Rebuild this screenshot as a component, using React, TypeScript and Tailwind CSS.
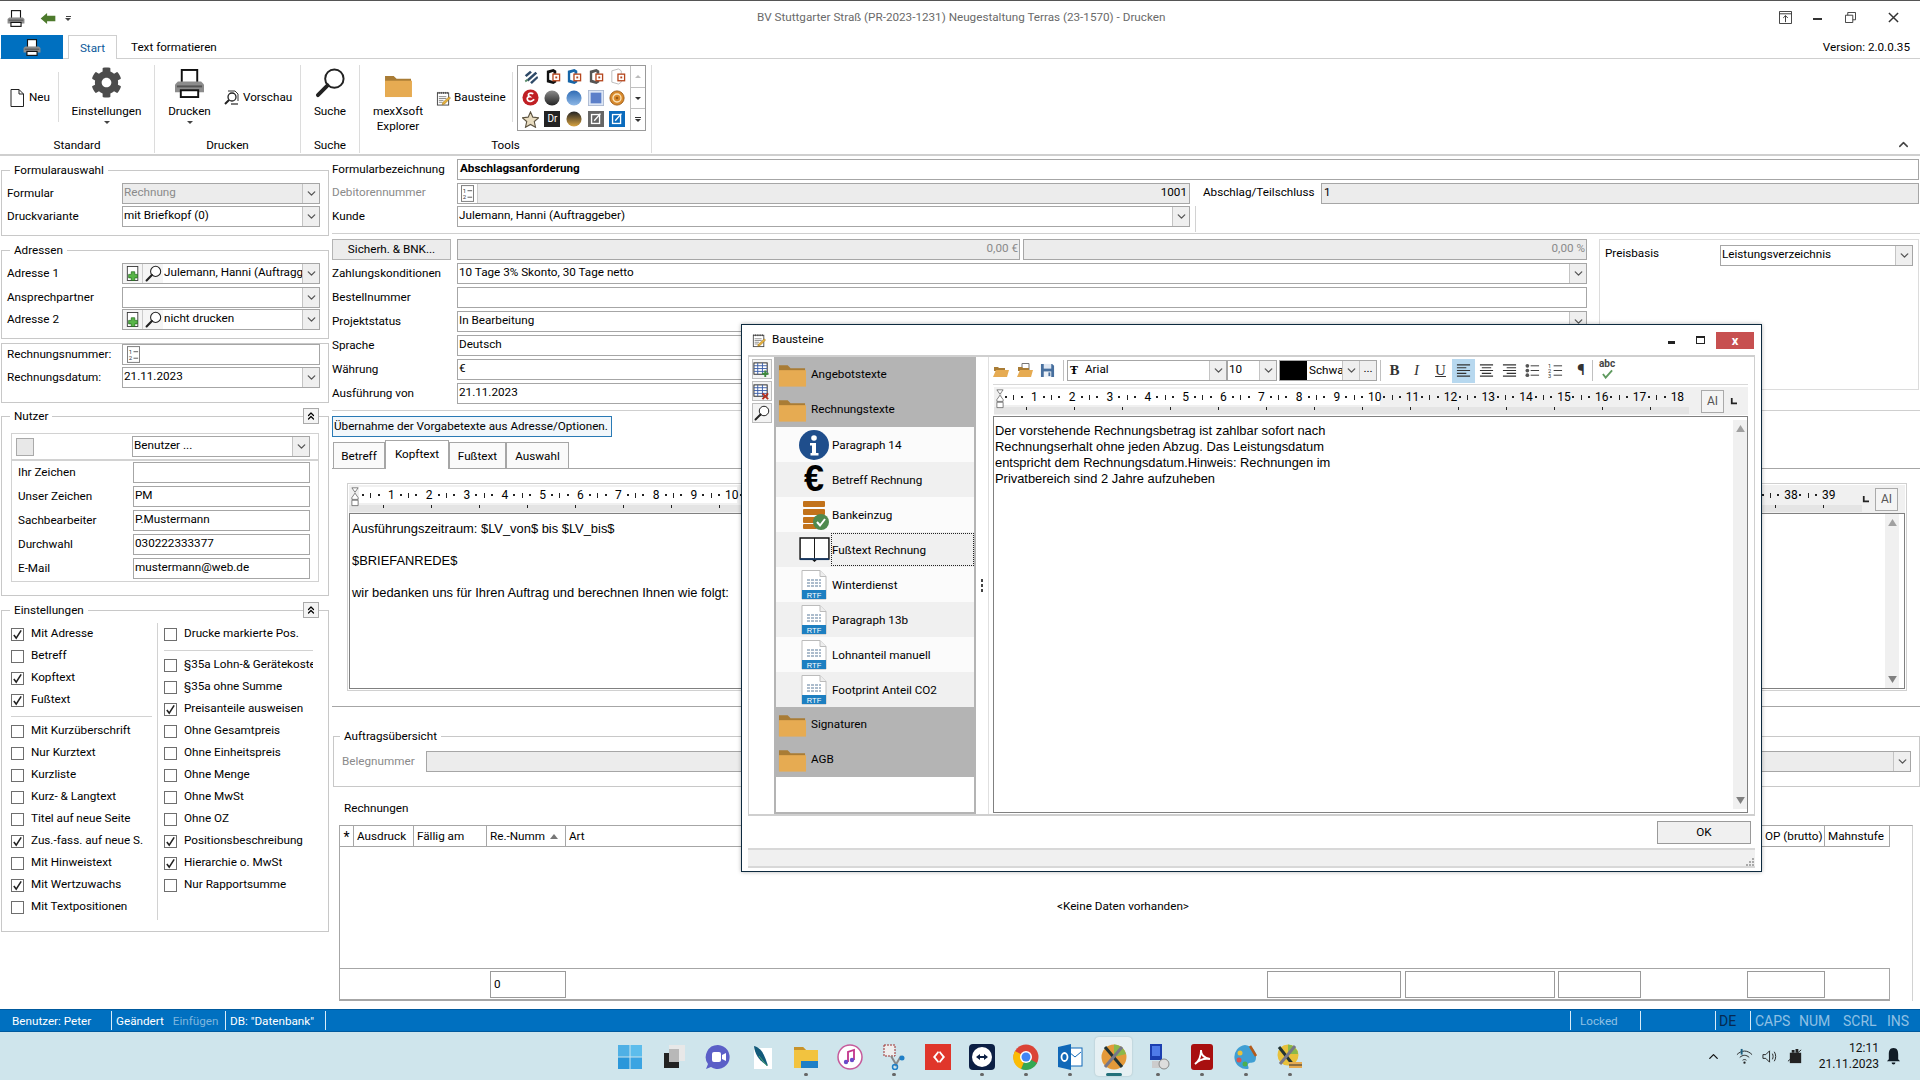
import React from "react";
import { FaCog } from "react-icons/fa";
import { ChevronsUp, ChevronDown, ChevronUp } from "lucide-react";

const UI = "[font-family:Roboto,sans-serif]";
const ARIAL = "[font-family:'Liberation_Sans',Arial,sans-serif]";

function Caret() {
  return <ChevronDown size={13} strokeWidth={2.4} className="text-[#555]" />;
}

function Printer({ className = "" }: { className?: string }) {
  return (
    <svg viewBox="0 0 32 30" className={className}>
      <rect x="8" y="1" width="16" height="14" fill="#fff" stroke="#111" strokeWidth="2" />
      <path d="M4 13h24l3 3v8H1v-8z" fill="#8c8c8c" />
      <rect x="3" y="17" width="26" height="2" fill="#555" />
      <rect x="7" y="22" width="18" height="7" fill="#fff" stroke="#111" strokeWidth="2" />
    </svg>
  );
}

function Folder({ className = "" }: { className?: string }) {
  return (
    <svg viewBox="0 0 30 26" className={className}>
      <path d="M1 3h9l3 3h15v18H1z" fill="#a97c35" />
      <path d="M1 8h28v17H1z" fill="#e6ab52" />
    </svg>
  );
}

function OpenFolder({ className = "", paper }: { className?: string; paper?: boolean }) {
  return (
    <svg viewBox="0 0 16 15" className={className}>
      {paper && <path d="M5 .5h7v7H5z" fill="#fff" stroke="#777" />}
      <path d="M1 4h4l1 1h6v3H1z" fill="#a97c35" />
      <path d="M3 7h13l-2 7H0z" fill="#e6ab52" />
    </svg>
  );
}

function Mag({ className = "" }: { className?: string }) {
  return (
    <svg viewBox="0 0 32 32" className={className}>
      <circle cx="20" cy="12" r="9.5" fill="#fff" stroke="#222" strokeWidth="2" />
      <path d="M13 19L3 29" stroke="#222" strokeWidth="4" strokeLinecap="round" />
    </svg>
  );
}

function NotePad({ className = "" }: { className?: string }) {
  return (
    <svg viewBox="0 0 16 16" className={className}>
      <rect x="1.5" y="2" width="12" height="13" fill="#fff" stroke="#444" />
      <path d="M2 1v2M4 1v2M6 1v2M8 1v2M10 1v2M12 1v2" stroke="#444" />
      <path d="M3 6h8M3 8h8M3 10h5M3 12h4" stroke="#888" />
      <path d="M14 6l1.5 1.5L9 14l-2.5.7.7-2.5z" fill="#e8b23c" stroke="#8a6414" strokeWidth=".5" />
    </svg>
  );
}

function NumIcon() {
  return (
    <svg viewBox="0 0 14 18" className="w-[13px] h-[17px]">
      <rect x=".5" y=".5" width="13" height="17" fill="#fff" stroke="#777" />
      <text x="2" y="8" fontSize="6.5" fill="#333">1</text>
      <text x="2" y="15" fontSize="6.5" fill="#333">2</text>
      <path d="M7 6h5M7 13h5" stroke="#555" />
    </svg>
  );
}

function Check() {
  return (
    <svg viewBox="0 0 12 12" className="w-[11px] h-[11px]">
      <path d="M2 6.5l2.6 3.4L10 1.5" fill="none" stroke="#222" strokeWidth="1.7" />
    </svg>
  );
}

function Cb({ label, on }: { label: string; on?: boolean }) {
  return (
    <div className="flex items-center h-[22px] whitespace-nowrap overflow-hidden">
      <div className="w-[13px] h-[13px] shrink-0 border border-[#6e6e6e] bg-white flex items-center justify-center">
        {on && <Check />}
      </div>
      <span className="ml-[7px]">{label}</span>
    </div>
  );
}

function Combo({ value, gray, lead, className = "" }: { value?: string; gray?: boolean; lead?: React.ReactNode; className?: string }) {
  return (
    <div className={"flex h-[21px] border border-[#a6a6a6] overflow-hidden " + (gray ? "bg-[#ececec] text-[#8a8a8a] " : "bg-white ") + className}>
      {lead}
      <span className="flex-1 min-w-0 px-[1px] leading-[17px] whitespace-nowrap overflow-hidden">{value}</span>
      <div className="w-[17px] shrink-0 border-l border-[#c4c4c4] bg-[#efefef] flex items-center justify-center">
        <Caret />
      </div>
    </div>
  );
}

function Input({ value, className = "", lead }: { value?: string; className?: string; lead?: React.ReactNode }) {
  return (
    <div className={"flex h-[21px] border border-[#a6a6a6] bg-white overflow-hidden " + className}>
      {lead}
      <span className="flex-1 px-[1px] leading-[17px] whitespace-nowrap overflow-hidden">{value}</span>
    </div>
  );
}

function AddLead() {
  return (
    <>
      <div className="w-[20px] shrink-0 border-r border-[#ccc] bg-[#f5f5f5] flex items-center justify-center">
        <svg viewBox="0 0 16 18" className="w-[14px] h-[17px]">
          <rect x="1.5" y="1" width="12" height="16" fill="#fff" stroke="#333" />
          <path d="M6 7h4v3h3v4h-3v3H6v-3H3v-4h3z" fill="#58b548" stroke="#1f6a18" strokeWidth=".8" />
        </svg>
      </div>
      <div className="w-[20px] shrink-0 bg-[#f5f5f5] flex items-center justify-center">
        <Mag className="w-[17px] h-[17px]" />
      </div>
    </>
  );
}

function Group({ title, className = "", children, collapse }: { title: string; className?: string; children: React.ReactNode; collapse?: boolean }) {
  return (
    <div className={"relative ml-[1px] w-[328px] border border-[#c8c8c8] " + className}>
      <div className="absolute -top-[9px] left-[8px] px-[4px] bg-white leading-[16px]">{title}</div>
      {collapse && (
        <div className="absolute -top-[9px] right-[9px] w-[16px] h-[16px] border border-[#aaa] bg-[#f4f4f4] flex items-center justify-center">
          <ChevronsUp size={12} strokeWidth={2.4} />
        </div>
      )}
      {children}
    </div>
  );
}

function LRow({ label, children, className = "", gray }: { label: string; children: React.ReactNode; className?: string; gray?: boolean }) {
  return (
    <div className={"flex items-center h-[21px] pl-[5px] " + className}>
      <span className={"w-[115px] shrink-0 whitespace-nowrap " + (gray ? "text-[#8a8a8a]" : "")}>{label}</span>
      <div className="w-[198px]">{children}</div>
    </div>
  );
}

function NRow({ label, value, className = "" }: { label: string; value?: string; className?: string }) {
  return (
    <div className={"flex items-center h-[21px] pl-[6px] " + className}>
      <span className="w-[115px] shrink-0">{label}</span>
      <Input value={value} className="w-[177px]" />
    </div>
  );
}

function Ruler({ n, tail, pad }: { n: number; tail?: React.ReactNode; pad: string }) {
  const seg = (i: number) => (
    <div key={i} className="w-[37.84px] shrink-0 flex items-center justify-between pl-[3px]">
      <i className="block w-[2px] h-[2px] bg-[#222]" />
      <i className="block w-[1px] h-[5px] bg-[#222]" />
      <i className="block w-[2px] h-[2px] bg-[#222]" />
      <span className="w-[11px] flex justify-center text-[12px] not-italic leading-none">{i + 1}</span>
    </div>
  );
  const ticks = Array.from({ length: 36 }, (_, i) => (
    <div key={i} className="w-[48px] shrink-0 flex justify-center">
      <i className="block w-[1px] h-[3px] bg-[#222]" />
    </div>
  ));
  const nums = Array.from({ length: n }, (_, i) => i);
  return (
    <div className="flex h-[28px] bg-[#f0f0f0]">
      <div className="relative flex-1 min-w-0 overflow-hidden">
        <svg viewBox="0 0 9 26" className="absolute left-[2px] top-[1px] w-[8px] h-[25px] z-10">
          <path d="M1 1h7L4.500 6zM4.500 7L8 12v2H1v-2zM1 15h7v6H1z" fill="#fff" stroke="#555" strokeWidth=".8" />
        </svg>
        <div className={"flex items-center h-[20px] bg-[#f0f0f0] " + pad}>
          <div className="flex items-center bg-white h-[16px]">{nums.slice(0, 10).map(seg)}</div>
          {nums.slice(10).map(seg)}
        </div>
        <div className={"flex h-[7px] bg-[#e4e4e4] overflow-hidden " + pad}>{ticks}</div>
      </div>
      {tail}
    </div>
  );
}

function RulerTail({ className = "" }: { className?: string }) {
  return (
    <div className={"flex items-center shrink-0 " + className}>
      <svg viewBox="0 0 8 8" className="w-[7px] h-[7px] mr-[6px]"><path d="M1 0h2v5h5v2H1z" fill="#222" /></svg>
      <div className="w-[23px] h-[23px] border border-[#aaa] bg-[#f4f4f4] flex items-center justify-center text-[#555] text-[12px]">AI</div>
    </div>
  );
}

function ScrollV({ className = "" }: { className?: string }) {
  return (
    <div className={"w-[14px] shrink-0 bg-[#f0f0f0] flex flex-col items-center justify-between py-[5px] " + className}>
      <svg viewBox="0 0 10 8" className="w-[9px] h-[7px]"><path d="M5 0l5 8H0z" fill="#a0a0a0" /></svg>
      <svg viewBox="0 0 10 8" className="w-[9px] h-[7px]"><path d="M5 8l5-8H0z" fill="#808080" /></svg>
    </div>
  );
}

function Hex({ c, faint }: { c: string; faint?: boolean }) {
  return (
    <svg viewBox="0 0 18 18" className="w-[17px] h-[17px]">
      {faint ? (
        <path d="M3 3l7-2 3 2v12l-3 2-7-2z" fill="#fff" stroke={c} />
      ) : (
        <path d="M3 3l7-2 3 2v3h-3V4L5.500 5.500v7L10 14v-1h3v2l-3 2-7-2z" fill={c} />
      )}
      <rect x="9.500" y="6.500" width="7" height="7" fill="#fff" stroke="#b5461d" strokeWidth="1.400" />
      <rect x="12" y="9" width="2" height="2" fill="#b5461d" />
    </svg>
  );
}

function Sphere({ a, b }: { a: string; b: string }) {
  const id = "s" + a.slice(1) + b.slice(1);
  return (
    <svg viewBox="0 0 18 18" className="w-[16px] h-[16px]">
      <defs>
        <linearGradient id={id} x1="0" y1="0" x2="0" y2="1">
          <stop offset="0" stopColor={a} />
          <stop offset="1" stopColor={b} />
        </linearGradient>
      </defs>
      <circle cx="9" cy="9" r="8.500" fill={"url(#" + id + ")"} />
    </svg>
  );
}

const gallery: React.ReactNode[] = [
  <svg viewBox="0 0 18 18" className="w-[16px] h-[16px]" key="a"><path d="M2 7l6-5 2 2-6 5zM4 12L14 3l2 2L6 14zM8 15l8-7 1 2-7 7z" fill="#2f4a68" /><path d="M2 13l3-2 1 2-3 2z" fill="#5a8a6a" /></svg>,
  <Hex c="#111" key="b" />,
  <Hex c="#1565a8" key="c" />,
  <Hex c="#555" key="d" />,
  <Hex c="#bbb" faint key="e" />,
  <svg viewBox="0 0 18 18" className="w-[17px] h-[17px]" key="f"><circle cx="9" cy="9" r="8.500" fill="#c01f24" /><path d="M12 5C8 3 5 6 8 8c-4 0-3 6 2 5l3-2" fill="none" stroke="#fff" strokeWidth="1.800" /></svg>,
  <Sphere a="#8c8c8c" b="#222222" key="g" />,
  <Sphere a="#2f6cb5" b="#8fb8e6" key="h" />,
  <svg viewBox="0 0 18 18" className="w-[16px] h-[16px]" key="i"><rect x=".5" y=".5" width="17" height="17" fill="#dde6f5" stroke="#aab8d0" /><rect x="3" y="3" width="12" height="12" fill="#5c7fc9" /></svg>,
  <svg viewBox="0 0 18 18" className="w-[16px] h-[16px]" key="j"><circle cx="9" cy="9" r="8" fill="#d98a2c" stroke="#9c5a14" /><circle cx="9" cy="9" r="4.500" fill="none" stroke="#fbe3b8" strokeWidth="1.500" /><circle cx="9" cy="9" r="1.500" fill="#9c5a14" /></svg>,
  <svg viewBox="0 0 18 18" className="w-[17px] h-[17px]" key="k"><path d="M9 1l2.500 5.500 6 .7-4.500 4 1.300 6L9 14.200 3.700 17.200l1.300-6-4.500-4 6-.7z" fill="#e8dcc0" stroke="#5c5340" strokeWidth="1.200" /></svg>,
  <div className="w-[16px] h-[16px] bg-[#222] text-white text-[10px] leading-[16px] text-center" key="l">Dr</div>,
  <Sphere a="#222222" b="#d9a441" key="m" />,
  <svg viewBox="0 0 18 18" className="w-[16px] h-[16px]" key="n"><rect width="18" height="18" fill="#666" /><rect x="4" y="4" width="9" height="10" fill="none" stroke="#fff" strokeWidth="1.500" /><path d="M7 11l7-8" stroke="#fff" strokeWidth="1.500" /></svg>,
  <svg viewBox="0 0 18 18" className="w-[16px] h-[16px]" key="o"><rect width="18" height="18" fill="#0b6bbd" /><rect x="4" y="4" width="9" height="10" fill="none" stroke="#fff" strokeWidth="1.500" /><path d="M7 11l7-8" stroke="#fff" strokeWidth="1.500" /></svg>,
];

function Ribbon() {
  return (
    <div className="relative flex h-[97px] border-b-2 border-[#cfcfcf] pt-[6px]">
      <div className="w-[155px] h-[88px] border-r border-[#dcdcdc] flex flex-col">
        <div className="flex h-[73px]">
          <div className="w-[58px] flex items-center pl-[10px] mt-[-7px]">
            <svg viewBox="0 0 14 18" className="w-[14px] h-[18px]"><path d="M1 .5h8l4.500 4.500v12.500H1zM9 .5V5h4.500" fill="#fff" stroke="#222" /></svg>
            <span className="ml-[5px]">Neu</span>
          </div>
          <div className="w-[1px] h-[50px] mt-[7px] bg-[#dcdcdc]" />
          <div className="flex-1 flex flex-col items-center pt-[2px]">
            <FaCog className="w-[31px] h-[31px] text-[#4c4c4c]" />
            <span className="mt-[5px] leading-[16px]">Einstellungen</span>
            <span className="mt-[2px] w-0 h-0 border-x-[3px] border-x-transparent border-t-[3px] border-t-[#444]" />
          </div>
        </div>
        <div className="h-[15px] leading-[15px] text-center">Standard</div>
      </div>
      <div className="w-[146px] h-[88px] border-r border-[#dcdcdc] flex flex-col">
        <div className="flex h-[73px]">
          <div className="w-[69px] flex flex-col items-center pt-[4px]">
            <Printer className="w-[31px] h-[29px]" />
            <span className="mt-[5px] leading-[16px]">Drucken</span>
            <span className="mt-[2px] w-0 h-0 border-x-[3px] border-x-transparent border-t-[3px] border-t-[#444]" />
          </div>
          <div className="flex items-center mt-[-7px]">
            <svg viewBox="0 0 16 16" className="w-[16px] h-[16px]">
              <path d="M4 1h7l3 3v7" fill="#fff" stroke="#333" />
              <circle cx="8" cy="7" r="4" fill="#fff" stroke="#222" strokeWidth="1.300" />
              <path d="M5 10l-4 4" stroke="#222" strokeWidth="2" />
              <path d="M7 14h7" stroke="#444" strokeWidth="1.400" />
            </svg>
            <span className="ml-[3px]">Vorschau</span>
          </div>
        </div>
        <div className="h-[15px] leading-[15px] text-center">Drucken</div>
      </div>
      <div className="w-[59px] h-[88px] border-r border-[#dcdcdc] flex flex-col">
        <div className="h-[73px] flex flex-col items-center pt-[2px]">
          <Mag className="w-[31px] h-[31px]" />
          <span className="mt-[5px] leading-[16px]">Suche</span>
        </div>
        <div className="h-[15px] leading-[15px] text-center">Suche</div>
      </div>
      <div className="w-[292px] h-[88px] border-r border-[#dcdcdc] flex flex-col">
        <div className="flex h-[73px]">
          <div className="w-[76px] flex flex-col items-center pt-[8px] leading-[15px] text-center">
            <Folder className="w-[29px] h-[25px]" />
            <span className="mt-[6px]">mexXsoft<br />Explorer</span>
          </div>
          <div className="w-[76px] flex items-center mt-[-7px] whitespace-nowrap">
            <NotePad className="w-[15px] h-[17px]" />
            <span className="ml-[3px]">Bausteine</span>
          </div>
          <div className="w-[1px] h-[50px] mt-[7px] bg-[#dcdcdc]" />
          <div className="ml-[4px] w-[129px] h-[66px] border border-[#9a9a9a] flex">
            <div className="w-[112px] grid grid-cols-5 grid-rows-3 place-items-center px-[2px]">{gallery}</div>
            <div className="flex-1 border-l border-[#c0c0c0] flex flex-col">
              <div className="flex-1 flex items-center justify-center"><span className="w-0 h-0 border-x-[3px] border-x-transparent border-b-[3px] border-b-[#bbb]" /></div>
              <div className="flex-1 flex items-center justify-center border-y border-[#c0c0c0]"><span className="w-0 h-0 border-x-[3px] border-x-transparent border-t-[3px] border-t-[#333]" /></div>
              <div className="flex-1 flex flex-col items-center justify-center"><span className="w-[6px] h-[1px] bg-[#333] mb-[1px]" /><span className="w-0 h-0 border-x-[3px] border-x-transparent border-t-[3px] border-t-[#333]" /></div>
            </div>
          </div>
        </div>
        <div className="h-[15px] leading-[15px] text-center pl-[0px]">Tools</div>
      </div>
      <div className="flex-1 flex justify-end items-end pr-[9px] pb-[2px]">
        <ChevronUp size={15} strokeWidth={2.4} className="text-[#444]" />
      </div>
    </div>
  );
}

function LeftColumn() {
  const leftA = ["Mit Adresse", "Betreff", "Kopftext", "Fußtext"];
  const onA = [true, false, true, true];
  const leftB: [string, boolean][] = [
    ["Mit Kurzüberschrift", false],
    ["Nur Kurztext", false],
    ["Kurzliste", false],
    ["Kurz- & Langtext", false],
    ["Titel auf neue Seite", false],
    ["Zus.-fass. auf neue S.", true],
    ["Mit Hinweistext", false],
    ["Mit Wertzuwachs", true],
    ["Mit Textpositionen", false],
  ];
  const right: [string, boolean][] = [
    ["§35a Lohn-& Gerätekosten", false],
    ["§35a ohne Summe", false],
    ["Preisanteile ausweisen", true],
    ["Ohne Gesamtpreis", false],
    ["Ohne Einheitspreis", false],
    ["Ohne Menge", false],
    ["Ohne MwSt", false],
    ["Ohne OZ", false],
    ["Positionsbeschreibung", true],
    ["Hierarchie o. MwSt", true],
    ["Nur Rapportsumme", false],
  ];
  return (
    <div className="w-[330px] shrink-0">
      <Group title="Formularauswahl" className="mt-[14px] h-[66px] pt-[12px]">
        <LRow label="Formular"><Combo value="Rechnung" gray /></LRow>
        <LRow label="Druckvariante" className="mt-[2px]"><Combo value="mit Briefkopf (0)" /></LRow>
      </Group>
      <Group title="Adressen" className="mt-[14px] h-[89px] pt-[12px]">
        <LRow label="Adresse 1"><Combo value="Julemann, Hanni (Auftraggeber)" lead={<AddLead />} /></LRow>
        <LRow label="Ansprechpartner" className="mt-[3px]"><Combo /></LRow>
        <LRow label="Adresse 2" className="mt-[1px]"><Combo value="nicht drucken" lead={<AddLead />} /></LRow>
      </Group>
      <div className="ml-[1px] mt-[4px] w-[328px] h-[60px] border border-[#c8c8c8]">
        <LRow label="Rechnungsnummer:">
          <Input lead={<div className="w-[20px] shrink-0 flex items-center justify-center"><NumIcon /></div>} />
        </LRow>
        <LRow label="Rechnungsdatum:" className="mt-[2px]"><Combo value="21.11.2023" /></LRow>
      </div>
      <Group title="Nutzer" collapse className="mt-[13px] h-[180px] pt-[16px] pl-[9px]">
        <div className="w-[308px] h-[149px] border border-[#d2d2d2]">
          <div className="h-[27px] border-b-2 border-[#d2d2d2] flex items-center pl-[4px]">
            <div className="w-[18px] h-[18px] bg-[#e8e8e8] border border-[#aaa]" />
            <Combo value="Benutzer ..." className="ml-[98px] w-[178px]" />
          </div>
          <NRow label="Ihr Zeichen" className="mt-[1px]" />
          <NRow label="Unser Zeichen" value="PM" className="mt-[3px]" />
          <NRow label="Sachbearbeiter" value="P.Mustermann" className="mt-[3px]" />
          <NRow label="Durchwahl" value="030222333377" className="mt-[3px]" />
          <NRow label="E-Mail" value="mustermann@web.de" className="mt-[3px]" />
        </div>
      </Group>
      <Group title="Einstellungen" collapse className="mt-[14px] h-[322px] pt-[12px] flex">
        <div className="w-[156px] h-[297px] border-r border-[#d2d2d2] pl-[9px] pr-[5px]">
          {leftA.map((t, i) => <Cb key={t} label={t} on={onA[i]} />)}
          <div className="h-[1px] bg-[#d2d2d2] mt-[5px] mb-[3px]" />
          {leftB.map(([t, on]) => <Cb key={t} label={t} on={on} />)}
        </div>
        <div className="w-[155px] pl-[6px]">
          <Cb label="Drucke markierte Pos." />
          <div className="h-[1px] bg-[#d2d2d2] mt-[5px] mb-[3px]" />
          {right.map(([t, on]) => <Cb key={t} label={t} on={on} />)}
        </div>
      </Group>
    </div>
  );
}

function RRow({ label, children, className = "", gray }: { label: string; children: React.ReactNode; className?: string; gray?: boolean }) {
  return (
    <div className={"flex items-center h-[21px] " + className}>
      <span className={"w-[125px] shrink-0 whitespace-nowrap " + (gray ? "text-[#8a8a8a] mb-[2px]" : "")}>{label}</span>
      <div className="flex-1 min-w-0">{children}</div>
    </div>
  );
}

function Foot({ className = "", children }: { className?: string; children?: React.ReactNode }) {
  return <div className={"h-[27px] shrink-0 border border-[#9a9a9a] pl-[3px] leading-[25px] " + className}>{children}</div>;
}

function RightColumn() {
  const heads: [string, string][] = [
    ["Ausdruck", "w-[60px]"],
    ["Fällig am", "w-[73px]"],
    ["Re.-Numm", "w-[79px]"],
    ["Art", "w-[1196px]"],
    ["OP (brutto)", "w-[63px]"],
    ["Mahnstufe", "w-[64px]"],
  ];
  return (
    <div className="flex-1 min-w-0 pl-[2px] flex flex-col">
      <div className="h-[78px] shrink-0 border-b border-[#cfcfcf] pt-[3px]">
        <RRow label="Formularbezeichnung" className="pr-[1px]">
          <Input value="Abschlagsanforderung" className="font-bold pl-[1px]" />
        </RRow>
        <div className="flex items-center h-[21px] mt-[3px]">
          <div className="w-[858px] shrink-0">
            <RRow label="Debitorennummer" gray>
              <div className="flex h-[21px] border border-[#a6a6a6] bg-[#ececec] text-black">
                <div className="w-[20px] shrink-0 bg-white border-r border-[#ccc] flex items-center justify-center"><NumIcon /></div>
                <span className="flex-1 text-right pr-[2px] leading-[17px]">1001</span>
              </div>
            </RRow>
          </div>
          <span className="ml-[13px] w-[118px] shrink-0 whitespace-nowrap mb-[2px]">Abschlag/Teilschluss</span>
          <div className="flex-1 mr-[1px] h-[21px] border border-[#a6a6a6] bg-[#ececec] pl-[2px] leading-[17px]">1</div>
        </div>
        <div className="flex mt-[2px]">
          <div className="w-[858px] shrink-0">
            <RRow label="Kunde"><Combo value="Julemann, Hanni (Auftraggeber)" /></RRow>
          </div>
          <div className="ml-[5px] w-[1px] h-[26px] bg-[#d2d2d2]" />
        </div>
      </div>
      <div className="h-[177px] shrink-0 border-b border-[#cfcfcf] flex">
        <div className="w-[1255px] shrink-0 pt-[5px]">
          <div className="flex h-[21px]">
            <div className="w-[119px] border border-[#b4b4b4] bg-[#ececec] text-center leading-[18px]">Sicherh. &amp; BNK...</div>
            <div className="ml-[6px] w-[563px] h-[21px] border border-[#a6a6a6] bg-[#ececec] text-[#8a8a8a] text-right pr-[1px] leading-[17px]">0,00 €</div>
            <div className="ml-[3px] flex-1 h-[21px] border border-[#a6a6a6] bg-[#ececec] text-[#8a8a8a] text-right pr-[1px] leading-[17px]">0,00 %</div>
          </div>
          <RRow label="Zahlungskonditionen" className="mt-[3px]"><Combo value="10 Tage 3% Skonto, 30 Tage netto" /></RRow>
          <RRow label="Bestellnummer" className="mt-[3px]"><Input /></RRow>
          <RRow label="Projektstatus" className="mt-[3px]"><Combo value="In Bearbeitung" /></RRow>
          <RRow label="Sprache" className="mt-[3px]"><Combo value="Deutsch" /></RRow>
          <RRow label="Währung" className="mt-[3px]"><Combo value="€" /></RRow>
          <RRow label="Ausführung von" className="mt-[3px]"><Combo value="21.11.2023" /></RRow>
        </div>
        <div className="ml-[12px] mt-[5px] w-[320px] h-[151px] border border-[#dcdcdc] flex items-start pl-[5px] pt-[5px]">
          <span className="w-[115px] leading-[16px]">Preisbasis</span>
          <Combo value="Leistungsverzeichnis" className="w-[193px]" />
        </div>
      </div>
      <div className="mt-[5px] w-[280px] h-[21px] shrink-0 border border-[#2a7ab5] bg-[#f2f7fb] leading-[18px] whitespace-nowrap pl-[1px]">Übernahme der Vorgabetexte aus Adresse/Optionen.</div>
      <div className="flex items-end h-[28px] shrink-0 mt-[3px] pl-[1px]">
        <div className="w-[52px] h-[26px] border border-b-0 border-[#a6a6a6] bg-[#fafafa] text-center leading-[27px]">Betreff</div>
        <div className="w-[64px] h-[29px] border-t border-x border-[#a6a6a6] bg-white text-center leading-[26px] z-10 mb-[-1px]">Kopftext</div>
        <div className="w-[57px] h-[26px] border border-b-0 border-[#a6a6a6] bg-[#fafafa] text-center leading-[27px]">Fußtext</div>
        <div className="w-[63px] h-[26px] border border-b-0 border-[#a6a6a6] bg-[#fafafa] text-center leading-[27px]">Auswahl</div>
      </div>
      <div className="h-[239px] shrink-0 border-y border-[#a6a6a6] pt-[14px] pl-[15px] pr-[13px]">
        <div className="h-[208px] border border-[#d0d0d0] p-[1px] flex flex-col">
          <Ruler n={39} pad="pl-[10px]" tail={<RulerTail className="pr-[7px]" />} />
          <div className={"flex-1 flex border border-[#808080] " + ARIAL}>
            <div className="flex-1 pl-[2px] pt-[7px] text-[12.9px] leading-[16px]">
              <p>Ausführungszeitraum: $LV_von$ bis $LV_bis$</p>
              <p className="mt-[16px]">$BRIEFANREDE$</p>
              <p className="mt-[16px]">wir bedanken uns für Ihren Auftrag und berechnen Ihnen wie folgt:</p>
            </div>
            <ScrollV className="mr-[5px]" />
          </div>
        </div>
      </div>
      <div className="relative mt-[29px] ml-[1px] h-[51px] shrink-0 border border-[#c8c8c8] flex items-center pl-[8px]">
        <div className="absolute -top-[9px] left-[6px] px-[4px] bg-white leading-[16px]">Auftragsübersicht</div>
        <span className="w-[84px] text-[#8a8a8a]">Belegnummer</span>
        <Combo gray className="flex-1 mr-[8px]" />
      </div>
      <div className="h-[16px] shrink-0 leading-[16px] mt-[13px] ml-[12px]">Rechnungen</div>
      <div className="mt-[9px] ml-[7px] mr-[7px] h-[176px] shrink-0 border-l border-r border-t border-[#a6a6a6] border-r-[#d2d2d2] flex flex-col">
        <div className="flex h-[21px] border-b border-[#a6a6a6] w-[1550px] border-r">
          <div className="w-[15px] border-r border-[#a6a6a6] text-center leading-[22px] text-[14px]">*</div>
          {heads.map(([t, w]) => (
            <div key={t} className={w + " shrink-0 border-r border-[#a6a6a6] last:border-r-0 pl-[3px] leading-[20px] whitespace-nowrap overflow-hidden flex items-center"}>
              {t}
              {t === "Re.-Numm" && <span className="ml-[5px] w-0 h-0 border-x-[4px] border-x-transparent border-b-[5px] border-b-[#777]" />}
            </div>
          ))}
        </div>
        <div className="flex-1 flex items-center justify-center pb-[2px] pr-[6px]">&lt;Keine Daten vorhanden&gt;</div>
        <div className="h-[33px] w-[1550px] border-t border-b-2 border-r border-[#a6a6a6] flex items-center">
          <Foot className="ml-[150px] w-[76px]">0</Foot>
          <Foot className="ml-[701px] w-[134px]" />
          <Foot className="ml-[4px] w-[150px]" />
          <Foot className="ml-[3px] w-[83px]" />
          <Foot className="ml-[106px] w-[78px]" />
        </div>
      </div>
    </div>
  );
}

function RtfIcon() {
  return (
    <svg viewBox="0 0 26 30" className="w-[26px] h-[30px]">
      <path d="M1 .5h18l6 6V29H1z" fill="#fff" stroke="#bbb" />
      <path d="M19 .5v6h6" fill="#eee" stroke="#bbb" />
      <path d="M6 10h14M6 13h14M6 16h14" stroke="#5a7a9a" strokeDasharray="3 1" />
      <rect x="1" y="20" width="24" height="9" fill="#1d7fc1" />
      <text x="13" y="27.500" textAnchor="middle" fontSize="7.500" fill="#fff" fontFamily="Liberation Sans">RTF</text>
    </svg>
  );
}

function Item({ label, idx, icon, focus }: { label: string; idx: number; icon: React.ReactNode; focus?: boolean }) {
  return (
    <div className={"flex h-[35px] items-center pl-[22px] " + (idx % 2 ? "bg-[#f0f0f0]" : "bg-[#fbfbfb]")}>
      <div className="w-[32px] flex justify-center">{icon}</div>
      <span className={"ml-[1px] flex-1 h-[33px] leading-[32px] whitespace-nowrap " + (focus ? "border border-dotted border-[#222]" : "border border-transparent")}>{label}</span>
    </div>
  );
}

function FolderRow({ label }: { label: string }) {
  return (
    <div className="flex h-[35px] items-center bg-[#b4b4b4] pl-[2px]">
      <Folder className="w-[29px] h-[26px]" />
      <span className="ml-[4px]">{label}</span>
    </div>
  );
}

function AlignGlyph({ d }: { d: string }) {
  return (
    <svg viewBox="0 0 16 16" className="w-[15px] h-[15px]"><path d={d} stroke="#333" strokeWidth="1.200" /></svg>
  );
}

function Modal() {
  return (
    <div className={"absolute left-[741px] top-[324px] w-[1021px] h-[548px] border border-[#0d2a3f] bg-white flex flex-col shadow-[0_0_4px_rgba(0,0,0,0.3)] " + UI}>
      <div className="h-[30px] shrink-0 flex items-center pl-[10px] pr-[7px]">
        <NotePad className="w-[14px] h-[15px]" />
        <span className="ml-[6px]">Bausteine</span>
        <div className="ml-auto flex items-center">
          <span className="w-[7px] h-[3px] bg-[#222] mt-[5px]" />
          <span className="ml-[21px] w-[9px] h-[8px] border border-[#222] border-t-[2px]" />
          <div className="ml-[11px] w-[38px] h-[17px] bg-[#c75050] flex items-center justify-center text-white text-[13px] font-bold leading-none">x</div>
        </div>
      </div>
      <div className="mx-[6px] h-[461px] shrink-0 border-t-2 border-x border-b-2 border-[#cfcfcf] flex">
        <div className="w-[25px] shrink-0 flex flex-col items-center gap-[2px] pt-[2px]">
          {["#3d8a3d", "#b5301f", ""].map((c, i) => (
            <div key={i} className="w-[20px] h-[20px] border border-[#bdbdbd] bg-[#f3f3f3] flex items-center justify-center">
              {c ? (
                <svg viewBox="0 0 18 18" className="w-[17px] h-[17px]">
                  <rect x="1" y="2" width="14" height="12" fill="#fff" stroke="#222" />
                  <path d="M1 5h14M1 8h14M1 11h14M5 2v12M10 2v12" stroke="#3b5fa8" />
                  <path d={i === 0 ? "M13 10v7M9.500 13.500h7" : "M10 11l6 6M16 11l-6 6"} stroke={c} strokeWidth="2" />
                </svg>
              ) : (
                <Mag className="w-[16px] h-[16px]" />
              )}
            </div>
          ))}
        </div>
        <div className="w-[202px] shrink-0 border-l-2 border-r-2 border-b-2 border-[#b4b4b4] overflow-hidden">
          <FolderRow label="Angebotstexte" />
          <FolderRow label="Rechnungstexte" />
          <Item idx={0} label="Paragraph 14" icon={
            <svg viewBox="0 0 30 30" className="w-[30px] h-[30px]"><circle cx="15" cy="15" r="15" fill="#1f4e8c" /><circle cx="15" cy="8" r="2.800" fill="#fff" /><path d="M11 13h6v10h2.500v2.500h-8V23H13v-7.500h-2z" fill="#fff" /></svg>
          } />
          <Item idx={1} label="Betreff Rechnung" icon={<span className={"text-[36px] leading-[30px] font-bold -mt-[2px] " + ARIAL}>€</span>} />
          <Item idx={0} label="Bankeinzug" icon={
            <svg viewBox="0 0 30 30" className="w-[30px] h-[30px]"><rect x="4" y="1" width="22" height="6" rx="1" fill="#c2721a" /><rect x="4" y="9" width="22" height="6" rx="1" fill="#c2721a" /><rect x="4" y="17" width="22" height="6" rx="1" fill="#c2721a" /><rect x="4" y="24" width="14" height="5" rx="1" fill="#c2721a" /><circle cx="22" cy="22" r="8" fill="#4f8a4f" /><path d="M18 22l3 3.500 5-6.500" fill="none" stroke="#fff" strokeWidth="2" /></svg>
          } />
          <Item idx={1} focus label="Fußtext Rechnung" icon={
            <svg viewBox="0 0 32 26" className="w-[31px] h-[25px]"><path d="M1 1h30v22H18l-2 2-2-2H1z" fill="#fff" stroke="#111" strokeWidth="1.500" /><path d="M16 1v22" stroke="#111" /><path d="M1 22h30v2H1z" fill="#16365f" /></svg>
          } />
          <Item idx={0} label="Winterdienst" icon={<RtfIcon />} />
          <Item idx={1} label="Paragraph 13b" icon={<RtfIcon />} />
          <Item idx={0} label="Lohnanteil manuell" icon={<RtfIcon />} />
          <Item idx={1} label="Footprint Anteil CO2" icon={<RtfIcon />} />
          <FolderRow label="Signaturen" />
          <FolderRow label="AGB" />
        </div>
        <div className="w-[12px] shrink-0 flex flex-col items-center justify-center gap-[2px]">
          <i className="block w-[2px] h-[3px] bg-[#444]" />
          <i className="block w-[2px] h-[3px] bg-[#444]" />
          <i className="block w-[2px] h-[3px] bg-[#444]" />
        </div>
        <div className="flex-1 min-w-0 flex flex-col border-l border-[#e0e0e0] pl-[4px] pr-[6px]">
          <div className="h-[28px] shrink-0 flex items-center border-b border-[#d8d8d8]">
            <OpenFolder className="w-[16px] h-[15px] shrink-0" />
            <OpenFolder paper className="ml-[8px] w-[16px] h-[15px] shrink-0" />
            <svg viewBox="0 0 16 16" className="ml-[7px] w-[15px] h-[15px] shrink-0"><path d="M1 1h12l2 2v12H1z" fill="#476f9e" /><rect x="4" y="1" width="8" height="5" fill="#dfe7f2" /><rect x="4" y="9" width="8" height="6" fill="#eef2f7" /><rect x="9" y="10" width="2" height="4" fill="#476f9e" /></svg>
            <i className="block shrink-0 ml-[8px] w-[1px] h-[21px] bg-[#c0c0c0]" />
            <div className="ml-[3px] w-[160px] shrink-0"><Combo value="Arial" lead={<span className="w-[14px] ml-[2px] text-[12px] leading-[18px] font-bold [font-family:'Liberation_Serif',serif]">Ŧ</span>} /></div>
            <div className="w-[50px] shrink-0"><Combo value="10" /></div>
            <div className="ml-[2px] shrink-0 flex h-[21px] w-[98px] border border-[#a6a6a6] overflow-hidden">
              <div className="w-[27px] bg-black" />
              <span className="flex-1 pl-[2px] leading-[18px] overflow-hidden">Schwa</span>
              <div className="w-[17px] shrink-0 border-l border-[#c4c4c4] bg-[#efefef] flex items-center justify-center"><Caret /></div>
              <div className="w-[17px] shrink-0 border-l border-[#c4c4c4] bg-[#efefef] text-center leading-[14px]">...</div>
            </div>
            <i className="block shrink-0 ml-[3px] w-[1px] h-[21px] bg-[#c0c0c0]" />
            <span className="ml-[6px] w-[15px] shrink-0 text-[15px] font-bold text-[#333] text-center [font-family:'Liberation_Serif',serif]">B</span>
            <span className="ml-[7px] w-[15px] shrink-0 text-[15px] italic text-[#333] text-center [font-family:'Liberation_Serif',serif]">I</span>
            <span className="ml-[9px] w-[15px] shrink-0 text-[15px] underline text-[#333] text-center [font-family:'Liberation_Serif',serif]">U</span>
            <div className="ml-[4px] w-[23px] h-[24px] shrink-0 bg-[#b7d8ef] flex items-center justify-center"><AlignGlyph d="M1 2h14M1 5h10M1 8h14M1 11h10M1 14h14" /></div>
            <div className="w-[23px] shrink-0 flex justify-center"><AlignGlyph d="M1 2h14M3 5h10M1 8h14M3 11h10M1 14h14" /></div>
            <div className="w-[23px] shrink-0 flex justify-center"><AlignGlyph d="M1 2h14M5 5h10M1 8h14M5 11h10M1 14h14" /></div>
            <div className="w-[23px] shrink-0 flex justify-center">
              <svg viewBox="0 0 16 16" className="w-[15px] h-[15px]"><circle cx="2.500" cy="3" r="2" fill="#555" /><circle cx="2.500" cy="8" r="2" fill="#555" /><circle cx="2.500" cy="13" r="2" fill="#555" /><path d="M6 3h9M6 8h9M6 13h9" stroke="#333" /></svg>
            </div>
            <div className="w-[23px] shrink-0 flex justify-center">
              <svg viewBox="0 0 16 16" className="w-[15px] h-[15px]"><text x="0" y="5.500" fontSize="6" fill="#333">1</text><text x="0" y="10.500" fontSize="6" fill="#333">2</text><text x="0" y="15.500" fontSize="6" fill="#333">3</text><path d="M6 3h9M6 8h9M6 13h9" stroke="#333" /></svg>
            </div>
            <span className="ml-[6px] w-[16px] shrink-0 text-[15px] font-bold text-[#333] text-center">¶</span>
            <i className="block shrink-0 ml-[3px] w-[1px] h-[21px] bg-[#c0c0c0]" />
            <div className="ml-[5px] w-[18px] h-[24px] shrink-0 flex flex-col items-center text-[10px] font-bold text-[#444] leading-[10px]">
              abc
              <svg viewBox="0 0 12 10" className="w-[11px] h-[10px]"><path d="M1 5l3 4 7-8" fill="none" stroke="#5f9a5f" strokeWidth="2" /></svg>
            </div>
          </div>
          <div className="h-[31px] shrink-0 pt-[2px] pl-[1px]">
            <Ruler n={18} pad="pl-[8px]" tail={<RulerTail className="w-[47px] flex-row-reverse justify-end gap-[6px] ml-[12px]" />} />
          </div>
          <div className={"flex-1 flex border border-[#808080] mb-[1px] " + ARIAL}>
            <div className="flex-1 pl-[1px] pt-[6px] text-[12.9px] leading-[16px]">
              <p>Der vorstehende Rechnungsbetrag ist zahlbar sofort nach</p>
              <p>Rechnungserhalt ohne jeden Abzug. Das Leistungsdatum</p>
              <p>entspricht dem Rechnungsdatum.Hinweis: Rechnungen im</p>
              <p>Privatbereich sind 2 Jahre aufzuheben</p>
            </div>
            <ScrollV className="mt-[3px] mb-[3px] mr-[0px]" />
          </div>
        </div>
      </div>
      <div className="h-[32px] shrink-0 flex items-center justify-end pr-[10px]">
        <div className="w-[94px] h-[23px] border border-[#9a9a9a] bg-[#f0f0f0] text-center leading-[21px]">OK</div>
      </div>
      <div className="mx-[6px] h-[20px] shrink-0 border-y-2 border-[#d8d8d8] bg-[#f0f0f0] flex justify-end items-end pr-[1px]">
        <svg viewBox="0 0 8 8" className="w-[8px] h-[8px]"><path d="M6 0h2v2H6zM3 3h2v2H3zM6 3h2v2H6zM0 6h2v2H0zM3 6h2v2H3zM6 6h2v2H6z" fill="#aaa" /></svg>
      </div>
    </div>
  );
}

function TaskIcon({ children, dot, active }: { children: React.ReactNode; dot?: boolean; active?: boolean }) {
  return (
    <div className="relative w-[44px] h-[48px] shrink-0 flex items-start justify-center pt-[12px]">
      {active && <div className="absolute top-[5px] left-[3px] w-[37px] h-[39px] bg-[#e6f0f3] rounded-[4px] shadow-[0_0_2px_rgba(0,0,0,0.2)]" />}
      <div className="relative w-[26px] h-[26px]">{children}</div>
      {dot && <i className={"absolute top-[41px] block h-[3px] rounded-full " + (active ? "w-[16px] bg-[#23707a]" : "w-[4px] bg-[#666]")} />}
    </div>
  );
}

function Taskbar() {
  return (
    <div className="h-[48px] shrink-0 bg-[#cfe5ec] flex items-start">
      <div className="ml-[608px] flex">
        <TaskIcon>
          <svg viewBox="0 0 26 26"><rect x="1" y="1" width="11.500" height="11.500" fill="#4fb0e5" /><rect x="13.500" y="1" width="11.500" height="11.500" fill="#5dbdec" /><rect x="1" y="13.500" width="11.500" height="11.500" fill="#2a97da" /><rect x="13.500" y="13.500" width="11.500" height="11.500" fill="#3ba4e2" /></svg>
        </TaskIcon>
        <TaskIcon>
          <svg viewBox="0 0 26 26"><rect x="8" y="1" width="16" height="16" fill="#e8e8e8" /><rect x="3" y="9" width="15" height="15" fill="#222" /><rect x="8" y="5" width="10" height="13" fill="#b8b8b8" /></svg>
        </TaskIcon>
        <TaskIcon>
          <svg viewBox="0 0 26 26"><path d="M13 1a12 12 0 1 1-7 22l-5 2 2-5A12 12 0 0 1 13 1z" fill="#5b5fc7" /><rect x="7" y="8" width="9" height="10" rx="2" fill="#fff" /><path d="M17 11l4-2v8l-4-2z" fill="#fff" /></svg>
        </TaskIcon>
        <TaskIcon>
          <svg viewBox="0 0 26 26"><rect x="5" y="4" width="18" height="21" fill="#fff" /><path d="M5 2c8 2 11 10 14 20C12 18 6 12 5 2z" fill="#135a7a" /><path d="M10 12l8 10" stroke="#4aa36f" /></svg>
        </TaskIcon>
        <TaskIcon dot>
          <svg viewBox="0 0 26 26"><path d="M1 3h9l3 3h12v18H1z" fill="#f2c33f" /><path d="M1 3h9l3 3H1z" fill="#c8932a" /><rect x="8" y="17" width="17" height="7" fill="#1e7fc7" /></svg>
        </TaskIcon>
        <TaskIcon>
          <svg viewBox="0 0 26 26"><circle cx="13" cy="13" r="12" fill="#fff" stroke="#c65a9b" strokeWidth="1.500" /><path d="M11 18V8l6-2v10" fill="none" stroke="#c2338a" strokeWidth="1.800" /><circle cx="9" cy="18" r="2.200" fill="#6a4bc9" /><circle cx="15" cy="16" r="2.200" fill="#6a4bc9" /></svg>
        </TaskIcon>
        <TaskIcon dot>
          <svg viewBox="0 0 26 26"><rect x="3" y="1" width="11" height="11" fill="#eee" stroke="#9c2f2f" strokeDasharray="2 1" /><path d="M10 12l6 10M20 12l-6 10" stroke="#888" strokeWidth="2" /><circle cx="14" cy="23" r="2.500" fill="none" stroke="#1e7fc7" strokeWidth="1.500" /><circle cx="21" cy="14" r="2.500" fill="#1e7fc7" /></svg>
        </TaskIcon>
        <TaskIcon>
          <svg viewBox="0 0 26 26"><rect width="26" height="26" fill="#e0362b" /><path d="M13 7l-5 6 5 6 1-1.500-3.500-4.500 3.500-4.500zM15 7l5 6-5 6-1-1.500 3.500-4.500L14 8.500z" fill="#fff" /></svg>
        </TaskIcon>
        <TaskIcon dot>
          <svg viewBox="0 0 26 26"><rect width="26" height="26" rx="4" fill="#0c1f44" /><circle cx="13" cy="13" r="10" fill="#fff" /><path d="M7 13l4-3v2h4v-2l4 3-4 3v-2h-4v2z" fill="#0c1f44" /></svg>
        </TaskIcon>
        <TaskIcon dot>
          <svg viewBox="0 0 26 26"><circle cx="13" cy="13" r="12.500" fill="#db4437" /><path d="M13 13L24 19A12.500 12.500 0 0 1 8 25z" fill="#35a853" /><path d="M13 13L8 25A12.500 12.500 0 0 1 2 7z" fill="#fbbc05" /><circle cx="13" cy="13" r="6" fill="#fff" /><circle cx="13" cy="13" r="4.500" fill="#4285f4" /></svg>
        </TaskIcon>
        <TaskIcon dot>
          <svg viewBox="0 0 26 26"><rect x="11" y="4" width="14" height="18" fill="#fff" stroke="#1068b8" /><path d="M12 8l6 5 6-5" fill="none" stroke="#1068b8" /><path d="M1 3l13-3v26L1 23z" fill="#1068b8" /><ellipse cx="7.500" cy="13" rx="3" ry="4" fill="none" stroke="#fff" strokeWidth="1.800" /></svg>
        </TaskIcon>
        <TaskIcon dot active>
          <svg viewBox="0 0 26 26"><circle cx="13" cy="13" r="12.500" fill="#e49a3a" /><path d="M13 .5A12.500 12.500 0 0 1 25 10L13 13z" fill="#8ab94a" /><path d="M4 3l17 20" stroke="#233" strokeWidth="3" /><path d="M21 3L4 23" stroke="#778" strokeWidth="3" /></svg>
        </TaskIcon>
        <TaskIcon dot>
          <svg viewBox="0 0 26 26"><rect x="5" y="0" width="12" height="16" fill="#1c3fb0" /><rect x="7" y="2" width="8" height="10" fill="#4f7be8" /><rect x="7" y="17" width="12" height="7" fill="#ccc" /><circle cx="19" cy="20" r="5" fill="#ddd" stroke="#888" /></svg>
        </TaskIcon>
        <TaskIcon dot>
          <svg viewBox="0 0 26 26"><rect x="2" y="0" width="22" height="26" rx="3" fill="#a80f0f" /><path d="M6 20c4-3 6-9 6-14 0 5 3 8 9 9-6-1-11 1-15 5z" fill="none" stroke="#fff" strokeWidth="1.800" /></svg>
        </TaskIcon>
        <TaskIcon dot>
          <svg viewBox="0 0 26 26"><path d="M12 1a12 12 0 1 0 3 24c2-2-2-4 1-6 3-1 7 1 7-6A12 12 0 0 0 12 1z" fill="#3f9fd4" /><circle cx="7" cy="9" r="2.500" fill="#e8c13b" /><circle cx="6" cy="16" r="2.500" fill="#d9534f" /><circle cx="12" cy="20" r="2.500" fill="#4caf50" /><path d="M17 2l6 10" stroke="#b55a1b" strokeWidth="2.500" /></svg>
        </TaskIcon>
        <TaskIcon dot>
          <svg viewBox="0 0 26 26"><circle cx="11" cy="11" r="10.500" fill="#e8c13b" /><path d="M11 .5A10.500 10.500 0 0 1 21 10H11z" fill="#8ab94a" /><path d="M2 3l15 19" stroke="#233" strokeWidth="3" /><path d="M18 2L3 20" stroke="#778" strokeWidth="3" /><rect x="12" y="18" width="13" height="6" fill="#e6ab52" /><path d="M12 21h13" stroke="#333" /></svg>
        </TaskIcon>
      </div>
      <div className="ml-auto flex items-center h-[48px] pr-[19px]">
        <ChevronUp size={15} strokeWidth={2} className="text-[#111]" />
        <svg viewBox="0 0 18 18" className="ml-[15px] w-[17px] h-[17px]"><path d="M1 7c5-5 11-5 16 0M4 10c3-3 7-3 10 0M7 13c1-1 3-1 4 0" fill="none" stroke="#222" /><circle cx="9" cy="15.500" r="1.200" fill="#222" /><path d="M5 1h2v6H5z" fill="#1d5f80" /></svg>
        <svg viewBox="0 0 18 18" className="ml-[9px] w-[17px] h-[17px]"><path d="M1 7h3l4-4v12l-4-4H1z" fill="none" stroke="#222" /><path d="M11 6c1 2 1 4 0 6M13 4c2 3 2 7 0 10" fill="none" stroke="#222" /></svg>
        <svg viewBox="0 0 18 18" className="ml-[8px] w-[17px] h-[17px]"><rect x="3" y="5" width="12" height="11" fill="#222" /><path d="M5 5V2h3v3M9 5V1h3v4" fill="#222" /><path d="M1 14L15 2" stroke="#222" /></svg>
        <div className="ml-[9px] w-[66px] text-right text-[12px] leading-[16px] text-[#111]">
          <div>12:11</div>
          <div>21.11.2023</div>
        </div>
        <svg viewBox="0 0 16 20" className="ml-[7px] w-[15px] h-[19px]"><path d="M8 1c4 0 5 3 5 7v5l2 2H1l2-2V8c0-4 1-7 5-7z" fill="#111c26" /><path d="M6 16.500h4a2 2 0 0 1-4 0z" fill="#111c26" /></svg>
      </div>
    </div>
  );
}

function StatusBar() {
  return (
    <div className="h-[23px] shrink-0 bg-[#0070c0] border-y border-[#005a9e] flex items-center text-white text-[11.7px] leading-[20px]">
      <div className="w-[112px] pl-[12px] border-r border-[#d8ecf8] h-[19px] whitespace-nowrap">Benutzer: Peter</div>
      <div className="w-[114px] pl-[4px] border-r border-[#d8ecf8] h-[19px] flex">
        <span>Geändert</span>
        <span className="ml-[9px] text-[#7fb6de]">Einfügen</span>
      </div>
      <div className="w-[100px] pl-[4px] border-r border-[#d8ecf8] h-[19px] whitespace-nowrap">DB: "Datenbank"</div>
      <div className="ml-[1244px] w-[71px] pl-[9px] border-x border-[#d8ecf8] h-[19px] text-[#8fc0e4]">Locked</div>
      <div className="ml-[74px] w-[36px] pl-[3px] border-x border-[#d8ecf8] h-[19px] text-[14px] text-[#052a52]">DE</div>
      <div className="ml-[4px] flex text-[14px] text-[#8fc0e4] whitespace-nowrap">
        <span className="w-[44px]">CAPS</span><span className="w-[44px]">NUM</span><span className="w-[44px]">SCRL</span><span className="w-[30px]">INS</span>
      </div>
    </div>
  );
}

export default function App() {
  return (
    <div className={"relative w-[1920px] h-[1080px] overflow-hidden bg-white text-black text-[11.7px] flex flex-col " + UI}>
      <div className="h-[35px] shrink-0 border-t border-[#555] flex items-center relative">
        <Printer className="ml-[7px] w-[18px] h-[17px]" />
        <svg viewBox="0 0 16 12" className="ml-[15px] w-[16px] h-[11px]"><path d="M7 0v3h9v6H7v3L0 6z" fill="#4d7a2c" /></svg>
        <span className="ml-[9px] flex flex-col items-center"><i className="block w-[5px] h-[1px] bg-[#444] mb-[1px]" /><i className="block w-0 h-0 border-x-[3px] border-x-transparent border-t-[3px] border-t-[#444]" /></span>
        <span className="absolute left-[757px] top-[8px] text-[#6a6a6a] whitespace-nowrap">BV Stuttgarter Straß (PR-2023-1231) Neugestaltung Terras (23-1570) - Drucken</span>
        <div className="ml-auto flex items-center pr-[21px] mb-[2px]">
          <svg viewBox="0 0 14 14" className="w-[13px] h-[13px]"><path d="M.5.5h13v13H.5zM.5 3h13M7 12V5M4.500 7.500L7 5l2.500 2.500" fill="none" stroke="#333" /></svg>
          <span className="ml-[21px] w-[9px] h-[2px] bg-[#333] mt-[3px]" />
          <svg viewBox="0 0 12 12" className="ml-[23px] w-[11px] h-[11px]"><path d="M.5 3.500h8v8h-8zM3 3.500V.5h8.500v8h-3" fill="none" stroke="#333" /></svg>
          <svg viewBox="0 0 12 12" className="ml-[32px] w-[11px] h-[11px]"><path d="M1 1l10 10M11 1L1 11" stroke="#333" strokeWidth="1.600" /></svg>
        </div>
      </div>
      <div className="h-[24px] shrink-0 flex border-b border-[#cfcfcf]">
        <div className="ml-[1px] w-[62px] h-[24px] bg-[#0070c0] flex items-center justify-center">
          <Printer className="w-[18px] h-[17px]" />
        </div>
        <div className="ml-[5px] w-[49px] h-[24px] border-x border-t border-[#cfcfcf] bg-white text-center leading-[24px] text-[#0d5a9a]">Start</div>
        <span className="ml-[14px] leading-[25px]">Text formatieren</span>
        <span className="ml-auto pr-[10px] leading-[24px]">Version: 2.0.0.35</span>
      </div>
      <Ribbon />
      <div className="flex h-[853px] shrink-0 overflow-hidden">
        <LeftColumn />
        <RightColumn />
      </div>
      <StatusBar />
      <Taskbar />
      <Modal />
    </div>
  );
}
